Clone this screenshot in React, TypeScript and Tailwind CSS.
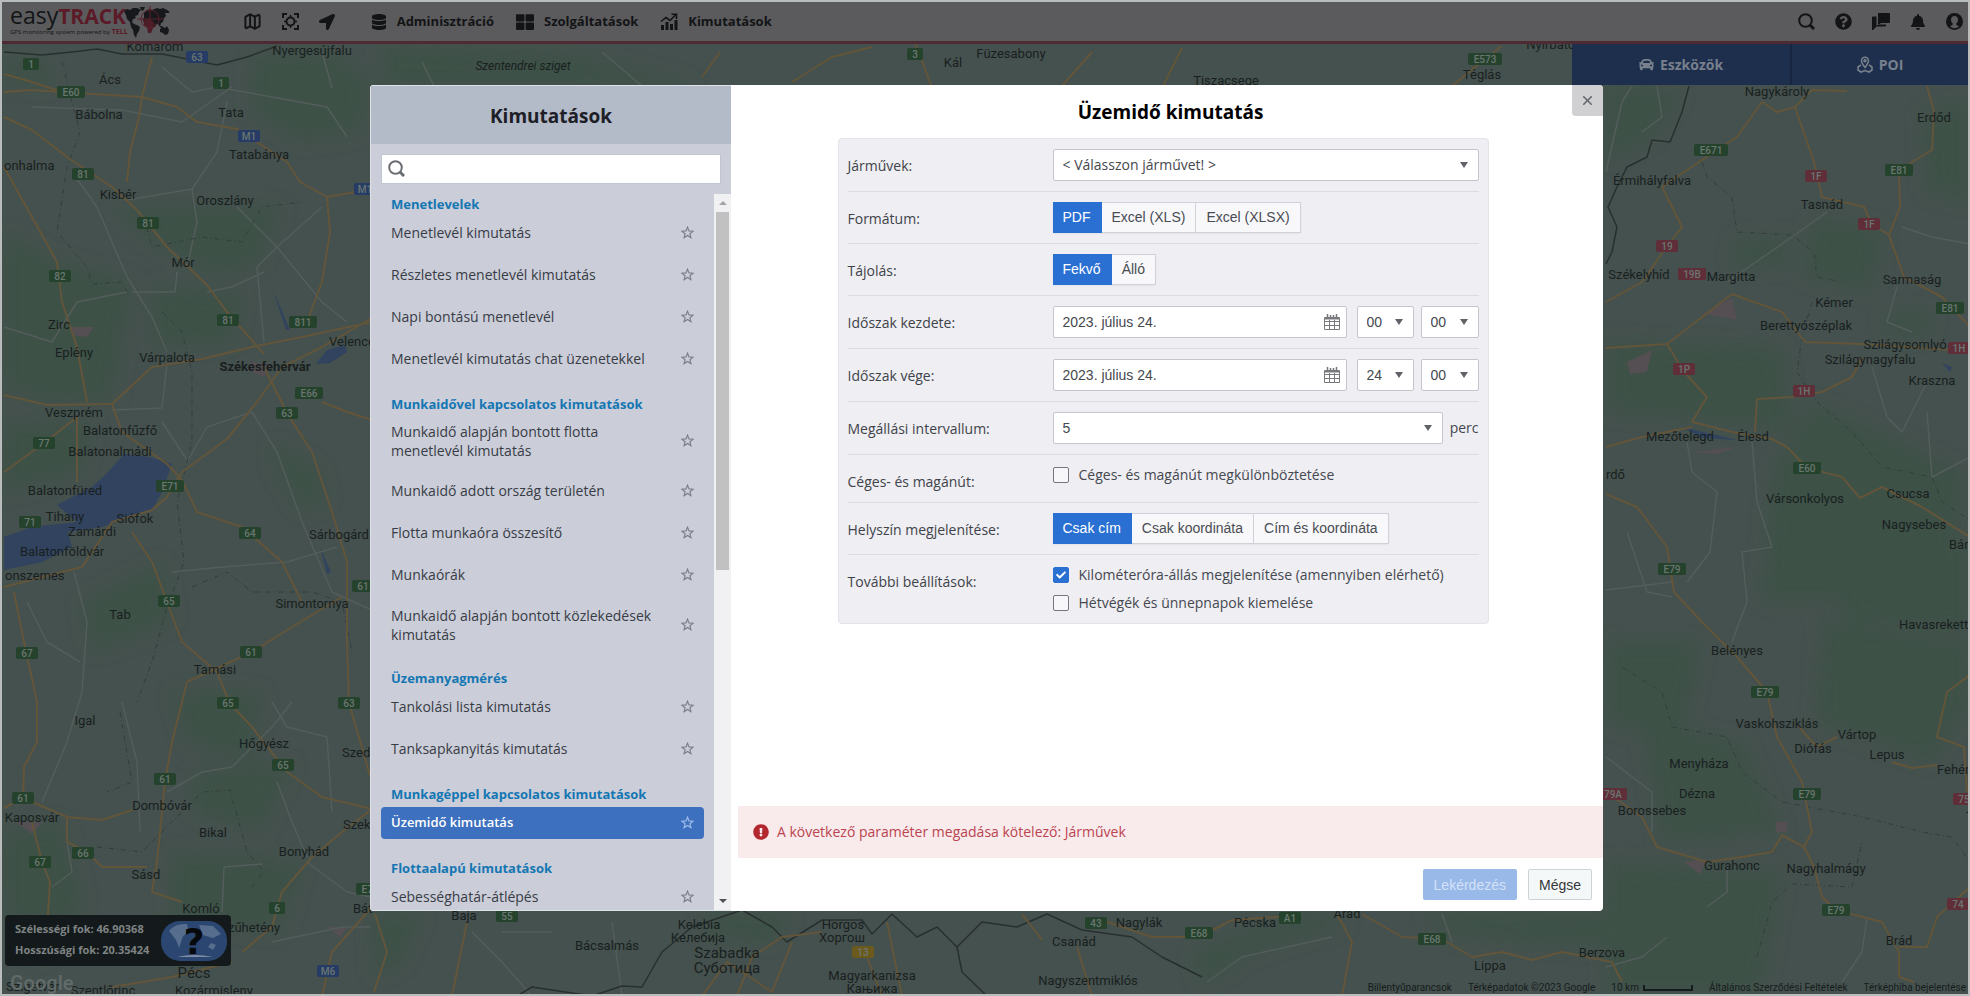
import React, { useState } from 'react';
import { Map as MapIcon, X } from 'lucide-react';
import { FaBell, FaCar, FaCheck, FaDatabase, FaExclamationCircle, FaLocationArrow, FaQuestionCircle, FaThLarge } from 'react-icons/fa';

type Point = [number, number];
type Place = [string, number, number, ('start' | 'middle')?, string?];
type Shield = [string, number, number, string];

const GREEN = '#25422d';
const BLUE = '#263c66';
const RED = '#602e39';
const YELLOW = '#6b5a1c';

const places: Place[] = [
  ['Komárom', 153, 45], ['Nyergesújfalu', 310, 49], ['Ács', 108, 78], ['Bábolna', 97, 113], ['Tata', 229, 111],
  ['Tatabánya', 257, 153], ['onhalma', 2, 164, 'start'], ['Kisbér', 116, 193], ['Oroszlány', 223, 199], ['Mór', 181, 261],
  ['Zirc', 57, 323], ['Eplény', 72, 351], ['Várpalota', 165, 356], ['Székesfehérvár', 263, 365, 'middle', 'text-[13px] font-bold'],
  ['Velence', 350, 340], ['Veszprém', 72, 411], ['Balatonfűzfő', 118, 429], ['Balatonalmádi', 108, 450],
  ['Balatonfüred', 63, 489], ['Tihany', 63, 515], ['Zamárdi', 90, 530], ['Siófok', 133, 517], ['Balatonföldvár', 60, 550],
  ['onszemes', 3, 574, 'start'], ['Sárbogárd', 337, 533], ['Simontornya', 310, 602], ['Tab', 118, 613], ['Tamási', 213, 668],
  ['Igal', 83, 719], ['Hőgyész', 262, 742], ['Szedr', 340, 751, 'start'], ['Dombóvár', 160, 804], ['Kaposvár', 30, 816],
  ['Bikal', 211, 831], ['Bonyhád', 302, 850], ['Szeks', 341, 823, 'start'], ['Sásd', 144, 873], ['Komló', 199, 907],
  ['Bát', 351, 907, 'start'], ['zűhetény', 226, 926, 'start'], ['Pécs', 192, 972, 'middle', 'text-[15px]'],
  ['Szentlőrinc', 101, 989], ['Kozármisleny', 212, 989], ['Szigetvár', 4, 985, 'start'],
  ['Szentendrei sziget', 521, 64, 'middle', 'text-xs italic'], ['Kál', 951, 61], ['Füzesabony', 1009, 52], ['Tiszacsege', 1224, 79],
  ['Téglás', 1480, 73], ['Nyírbátor', 1551, 43], ['Nagykároly', 1775, 90], ['Erdőd', 1932, 116], ['Érmihályfalva', 1650, 179],
  ['Tasnád', 1820, 203], ['Székelyhíd', 1637, 273], ['Margitta', 1729, 275], ['Sarmaság', 1910, 278], ['Kémer', 1832, 301],
  ['Berettyószéplak', 1804, 324], ['Szilágysomlyó', 1903, 343], ['Szilágynagyfalu', 1868, 358], ['Kraszna', 1930, 379],
  ['Mezőtelegd', 1678, 435], ['Élesd', 1751, 435], ['rdő', 1604, 473, 'start'], ['Vársonkolyos', 1803, 497],
  ['Csucsa', 1906, 492], ['Nagysebes', 1912, 523], ['Bán', 1947, 543, 'start'], ['Havasreketty', 1897, 623, 'start'],
  ['Belényes', 1735, 649], ['Vaskohsziklás', 1775, 722], ['Vártop', 1855, 733], ['Diófás', 1811, 747], ['Lepus', 1885, 753],
  ['Menyháza', 1697, 762], ['Fehérv', 1935, 768, 'start'], ['Dézna', 1695, 792], ['Borossebes', 1650, 809],
  ['T', 1964, 815, 'start'], ['Gurahonc', 1730, 864], ['Nagyhalmágy', 1824, 867], ['Brád', 1897, 939], ['Berzova', 1600, 951],
  ['Baja', 462, 914], ['Kelebia', 697, 923], ['Келебија', 696, 936], ['Horgos', 841, 923], ['Хоргош', 840, 936],
  ['Bácsalmás', 605, 944], ['Szabadka', 725, 952, 'middle', 'text-[15px]'],
  ['Суботица', 725, 967, 'middle', 'text-[15px]'], ['Magyarkanizsa', 870, 974], ['Кањижа', 870, 987],
  ['Nagylák', 1137, 921], ['Csanád', 1072, 940], ['Pécska', 1253, 921], ['Arad', 1345, 912], ['Nagyszentmiklós', 1086, 979],
  ['Lippa', 1488, 964],
];

const shields: Shield[] = [
  ['1', 29, 62, GREEN], ['63', 195, 55, BLUE], ['1', 219, 81, GREEN], ['E60', 69, 90, GREEN], ['M1', 247, 134, BLUE],
  ['M1', 363, 187, BLUE], ['81', 81, 172, GREEN], ['81', 146, 221, GREEN], ['82', 58, 274, GREEN], ['81', 226, 318, GREEN],
  ['811', 301, 320, GREEN], ['E66', 307, 391, GREEN], ['63', 285, 411, GREEN], ['77', 42, 441, GREEN], ['E71', 168, 484, GREEN],
  ['71', 28, 520, GREEN], ['64', 248, 531, GREEN], ['65', 167, 599, GREEN], ['61', 361, 584, GREEN], ['67', 25, 651, GREEN],
  ['61', 249, 650, GREEN], ['65', 226, 701, GREEN], ['63', 347, 701, GREEN], ['61', 163, 777, GREEN], ['65', 281, 763, GREEN],
  ['61', 21, 796, GREEN], ['66', 81, 851, GREEN], ['67', 38, 860, GREEN], ['6', 275, 906, GREEN], ['M6', 326, 969, BLUE],
  ['E73', 368, 887, GREEN], ['3', 913, 52, GREEN], ['E573', 1483, 57, GREEN], ['E671', 1709, 148, GREEN], ['1F', 1814, 174, RED],
  ['E81', 1897, 168, GREEN], ['1F', 1867, 222, RED], ['19', 1665, 244, RED], ['19B', 1690, 272, RED], ['E81', 1948, 306, GREEN],
  ['1H', 1957, 346, RED], ['1P', 1682, 367, RED], ['1H', 1802, 389, RED], ['E60', 1805, 466, GREEN], ['E79', 1670, 567, GREEN],
  ['E79', 1763, 690, GREEN], ['79A', 1611, 792, RED], ['E79', 1805, 792, GREEN], ['75', 1962, 797, RED], ['E79', 1834, 908, GREEN],
  ['74', 1956, 902, RED], ['13', 861, 950, YELLOW], ['43', 1094, 921, GREEN], ['E68', 1197, 931, GREEN], ['A1', 1288, 916, GREEN],
  ['E68', 1430, 937, GREEN], ['55', 505, 914, GREEN],
];

const roads: Point[][] = [
  [[2, 90], [28, 88], [140, 95], [175, 105], [195, 120], [235, 127], [285, 160], [298, 180], [325, 195], [370, 187]],
  [[2, 72], [30, 80], [60, 90]],
  [[150, 55], [140, 95], [137, 115], [128, 150], [125, 180]],
  [[2, 115], [30, 128], [65, 155], [110, 185], [135, 208], [165, 245], [205, 283], [225, 310], [262, 352]],
  [[2, 165], [30, 215], [55, 260], [60, 300], [75, 345], [85, 400]],
  [[2, 393], [45, 403], [110, 402], [150, 365], [200, 357], [250, 345], [300, 335], [370, 320]],
  [[370, 316], [320, 345], [280, 365], [255, 400], [225, 437], [180, 470], [165, 495], [150, 508], [110, 520], [80, 565], [60, 570], [2, 585]],
  [[325, 195], [328, 230], [320, 280], [305, 320]],
  [[2, 470], [42, 441], [75, 415], [75, 480]],
  [[110, 402], [120, 430], [165, 462], [180, 478]],
  [[180, 478], [195, 510], [240, 525], [280, 560], [300, 600]],
  [[262, 365], [285, 411], [310, 450], [330, 510], [345, 560], [345, 640], [347, 701], [370, 780]],
  [[320, 400], [345, 410], [370, 418]],
  [[340, 595], [290, 625], [250, 650], [185, 680], [170, 740], [163, 780], [155, 860], [150, 890], [180, 900]],
  [[130, 530], [150, 560], [165, 600], [180, 640], [215, 670], [228, 702], [250, 725], [285, 770], [320, 795], [370, 807]],
  [[12, 590], [22, 640], [35, 700], [35, 740], [22, 765], [21, 796], [2, 806]],
  [[21, 796], [65, 815], [100, 818], [130, 808]],
  [[65, 815], [65, 840], [85, 850], [100, 865], [145, 865]],
  [[30, 820], [40, 860], [48, 880], [45, 925]],
  [[370, 807], [340, 830], [310, 855], [280, 890], [270, 925], [240, 950]],
  [[370, 905], [330, 950], [320, 994]],
  [[110, 985], [170, 975], [230, 960]],
  [[700, 75], [718, 50]], [[790, 80], [830, 55], [870, 45]], [[913, 40], [930, 86]], [[1060, 84], [1090, 50]],
  [[1160, 86], [1180, 46]], [[1450, 84], [1483, 57], [1500, 44]],
  [[1845, 89], [1810, 88], [1793, 105], [1812, 160], [1820, 195], [1862, 205], [1870, 222], [1887, 233]],
  [[1793, 105], [1775, 110], [1760, 100], [1735, 135], [1700, 158], [1660, 185], [1680, 225], [1665, 244], [1640, 280], [1604, 300]],
  [[1925, 84], [1932, 110], [1930, 148], [1897, 168], [1898, 205], [1887, 233], [1902, 275], [1940, 295], [1968, 325]],
  [[1604, 346], [1665, 342], [1730, 292], [1780, 310], [1803, 340], [1860, 342], [1950, 348]],
  [[1665, 342], [1682, 370], [1705, 395], [1690, 420], [1730, 430], [1770, 437], [1785, 445], [1805, 466], [1840, 475], [1858, 496], [1880, 485], [1920, 505], [1968, 535]],
  [[1604, 445], [1640, 435], [1690, 425]],
  [[1753, 430], [1755, 397], [1790, 395], [1820, 390], [1850, 375], [1860, 355]],
  [[1604, 492], [1635, 505], [1665, 545], [1672, 590], [1700, 620], [1735, 655], [1765, 690], [1775, 735], [1800, 780], [1810, 830], [1802, 845], [1812, 865], [1820, 895], [1834, 908], [1880, 920], [1897, 950], [1897, 975], [1912, 980]],
  [[1797, 725], [1815, 745], [1835, 735]],
  [[1890, 760], [1910, 766], [1935, 763]],
  [[1968, 673], [1945, 690], [1935, 735], [1962, 745], [1965, 790]],
  [[1604, 790], [1640, 815], [1655, 845], [1705, 860], [1740, 855], [1770, 850], [1780, 833], [1802, 845]],
  [[1968, 885], [1935, 915], [1925, 945], [1897, 945]],
  [[373, 912], [385, 950], [372, 990]], [[465, 920], [450, 994]],
  [[735, 994], [750, 955], [780, 935], [820, 930]], [[700, 994], [725, 960], [770, 990], [790, 940]],
  [[865, 955], [880, 994]], [[885, 920], [900, 994]], [[1020, 912], [1040, 938]],
  [[1075, 945], [1090, 994]], [[1100, 918], [1150, 935], [1197, 935], [1230, 918], [1290, 914]],
  [[1335, 912], [1350, 940], [1340, 994]], [[1360, 912], [1400, 935], [1440, 937], [1470, 955], [1500, 950], [1530, 958], [1560, 950], [1610, 960], [1620, 980]],
];

const lanes: Point[][] = [
  [[30, 105], [120, 108], [180, 120], [230, 85]], [[160, 65], [190, 90], [215, 85], [325, 105], [345, 135]],
  [[70, 170], [95, 205], [125, 275], [150, 315], [165, 350]], [[125, 198], [190, 187], [195, 220], [185, 265]],
  [[190, 187], [215, 150], [225, 100]], [[235, 205], [275, 245], [255, 265], [262, 340]], [[275, 245], [320, 205]],
  [[130, 290], [173, 290], [175, 270]], [[205, 290], [230, 285], [262, 270]], [[275, 245], [320, 300], [345, 320]],
  [[2, 325], [50, 340], [75, 300], [125, 290]], [[110, 408], [160, 406], [165, 362]], [[160, 420], [185, 458]],
  [[250, 410], [275, 450], [300, 520], [330, 590], [370, 608]], [[185, 460], [205, 425], [250, 410]],
  [[170, 570], [220, 565], [285, 560], [335, 545]], [[72, 570], [85, 620], [80, 690], [65, 740], [40, 800]],
  [[25, 600], [45, 640], [78, 660]], [[120, 700], [135, 760], [138, 830]], [[165, 790], [200, 770], [230, 765], [270, 725], [290, 700]],
  [[325, 735], [285, 725], [270, 700]], [[325, 735], [330, 810]], [[275, 780], [290, 820], [305, 855]],
  [[220, 910], [222, 865], [260, 862]], [[65, 840], [70, 870], [50, 885]], [[305, 860], [345, 890], [368, 895]],
  [[270, 940], [340, 925], [368, 925]], [[320, 50], [330, 86]], [[420, 60], [440, 100]], [[600, 50], [640, 84]],
  [[1604, 170], [1620, 100], [1630, 84]], [[1655, 84], [1660, 115], [1640, 130]], [[1725, 280], [1790, 235], [1825, 210]],
  [[1900, 225], [1930, 235], [1968, 242]], [[1895, 285], [1885, 320], [1910, 330]], [[1870, 365], [1885, 415], [1900, 430], [1925, 380]],
  [[1925, 410], [1930, 475], [1968, 455]], [[1750, 440], [1755, 500], [1770, 545], [1740, 550], [1745, 600], [1730, 640]],
  [[1685, 440], [1690, 470], [1715, 490], [1708, 550], [1685, 580]], [[1604, 588], [1670, 580]],
  [[1625, 530], [1645, 590], [1670, 595]], [[1604, 755], [1650, 790], [1650, 830]], [[1725, 865], [1725, 890], [1705, 905]],
  [[1865, 915], [1860, 950], [1840, 980]], [[1604, 965], [1640, 955], [1665, 935]], [[470, 930], [500, 960], [530, 994]],
  [[500, 930], [550, 930]], [[610, 920], [620, 994]], [[1205, 980], [1240, 955], [1330, 935]], [[1440, 912], [1450, 940]],
];

const borders: Point[][] = [
  [[2, 50], [40, 53], [70, 50], [95, 47], [120, 52], [160, 52], [215, 63], [245, 55], [275, 44]],
  [[1687, 84], [1680, 110], [1668, 140], [1650, 138], [1645, 155], [1625, 165], [1615, 185], [1606, 205], [1615, 225], [1610, 250], [1604, 262]],
  [[515, 994], [530, 985], [590, 994], [620, 984], [640, 985], [660, 950], [690, 925], [740, 908], [770, 925], [785, 940], [820, 918], [860, 918], [870, 932], [890, 912], [915, 935], [935, 925], [955, 945], [980, 920], [1015, 925], [1045, 912], [1080, 928], [1130, 935], [1160, 955], [1200, 975]],
  [[955, 945], [960, 970], [985, 994]],
];

const counties: Point[][] = [
  [[60, 60], [70, 100], [78, 130], [65, 165], [55, 230], [85, 265], [90, 282], [120, 280], [125, 290]],
  [[145, 225], [150, 245], [200, 235], [240, 240], [260, 205], [300, 200]],
  [[160, 310], [180, 330], [190, 370], [190, 440], [175, 500], [182, 560], [165, 605], [150, 660], [135, 700]],
  [[190, 585], [225, 570], [250, 590], [310, 590], [340, 600], [350, 650]],
  [[118, 710], [130, 780], [105, 790]], [[95, 845], [140, 850], [160, 830], [200, 790], [228, 788], [245, 850], [262, 870], [250, 885]],
  [[1700, 160], [1705, 175], [1730, 195], [1735, 230], [1790, 233], [1812, 250], [1815, 275], [1840, 280]],
  [[1810, 300], [1800, 335], [1795, 370], [1815, 400], [1850, 430], [1880, 465], [1930, 475], [1940, 500], [1968, 518]],
  [[1620, 665], [1660, 690], [1670, 725], [1725, 735], [1740, 770], [1780, 800], [1860, 815], [1920, 830], [1950, 835], [1968, 860]],
  [[1755, 955], [1770, 900], [1790, 882], [1850, 885], [1860, 840]],
];

const toPoints = (line: Point[]) => line.map((p) => p.join(',')).join(' ');

function MapCanvas() {
  return (
    <svg className="absolute left-0 top-0 max-w-none" width="1970" height="996" aria-hidden="true">
      <defs>
        <filter id="soft"><feGaussianBlur stdDeviation="9" /></filter>
      </defs>
      <rect width="1970" height="996" fill="#45514e" />
      {/* forests and hills */}
      <g fill="#3d5147" filter="url(#soft)">
        <path d="M250 55L330 50L370 80L360 130L300 140L250 110Z" />
        <path d="M2 60L45 60L50 85L2 80Z M2 230L60 260L130 280L110 400L60 400L2 390Z" />
        <path d="M110 205L180 205L280 205L255 265L205 270L150 240Z" />
        <path d="M150 285L240 290L230 340L150 345Z M2 420L90 420L80 470L2 490Z" />
        <path d="M270 440L315 465L325 500L300 510L275 470Z M80 600L160 560L170 620L90 650Z" />
        <path d="M170 690L260 690L250 760L185 740Z M190 770L290 760L260 830L190 810Z" />
        <path d="M2 830L60 820L80 900L40 960L2 900Z M170 850L300 860L280 930L170 920Z" />
        <path d="M380 44L560 50L700 84L380 84Z M1604 84L1680 90L1650 135L1604 160Z" />
        <path d="M1920 110L1968 100L1968 200L1925 190Z M1735 235L1790 235L1780 265L1730 265Z" />
        <path d="M1810 215L1880 225L1870 290L1800 275Z M1605 340L1780 345L1790 430L1700 420L1605 410Z" />
        <path d="M1810 400L1900 440L1960 470L1950 600L1760 600L1770 470Z" />
        <path d="M1604 640L1700 640L1680 740L1604 720Z M1820 620L1968 640L1968 700L1930 760L1815 720Z" />
        <path d="M1604 860L1780 870L1760 990L1604 990Z M1640 720L1740 740L1780 830L1660 840Z" />
        <path d="M370 912L420 912L400 960L372 975Z M700 912L790 912L770 940L710 935Z" />
        <path d="M1190 950L1300 912L1350 920L1250 950L1200 985Z M1420 912L1604 912L1604 945L1450 935Z" />
        <path d="M1840 540L1968 540L1968 630L1840 620Z M1880 310L1930 310L1925 335L1885 330Z" />
      </g>
      {/* towns */}
      <g fill="#554f53">
        <path d="M68 325L92 325L85 335L70 333Z M248 360L270 362L262 375L250 370Z" />
        <path d="M1700 312L1730 296L1735 318Z M1625 360L1650 348L1645 370L1628 372Z M1690 450L1735 445L1715 452Z" />
        <path d="M1682 860L1705 857L1698 872Z M1774 820L1785 820L1785 830L1774 830Z M14 820L40 820L30 832Z M325 925L345 925L338 935Z" />
      </g>
      <g fill="#31435f">
        <path d="M170 462L148 455L122 452L104 472L90 485L55 503L75 520L30 525L2 535L2 568L40 560L70 545L66 530L100 525L150 508L160 490Z" />
        <path d="M314 362L325 348L343 343L345 350L328 361Z M271 288L288 328L284 328Z M318 545L329 570L325 572Z" />
        <path d="M1680 425L1735 438L1700 436Z M1940 361L1950 365L1948 370Z" />
      </g>
      <g fill="none" strokeLinejoin="round">
        {lanes.map((line, i) => <polyline key={i} points={toPoints(line)} stroke="#535d5b" strokeWidth="1.5" />)}
        {counties.map((line, i) => <polyline key={i} points={toPoints(line)} stroke="#333e3c" strokeWidth="1" strokeDasharray="5 3 1 3" />)}
        {borders.map((line, i) => <polyline key={i} points={toPoints(line)} stroke="#28302f" strokeWidth="1.5" />)}
        {roads.map((line, i) => <polyline key={i} points={toPoints(line)} stroke="#62553a" strokeWidth="2" />)}
      </g>
      {shields.map(([name, x, y, color], i) => (
        <g key={i}>
          <rect x={x - name.length * 3 - 5} y={y - 6} width={name.length * 6 + 10} height="12" rx="2" fill={color} />
          <text x={x} y={y + 4} textAnchor="middle" fill="#6a7670" className="font-['Roboto',sans-serif] text-[10px] font-medium">{name}</text>
        </g>
      ))}
      {places.map(([name, x, y, anchor = 'middle', extra = 'text-[13px]']) => (
        <text key={name} x={x} y={y + 4} textAnchor={anchor} fill="#191f20" className={`font-['Roboto',sans-serif] ${extra}`}>
          {name}
        </text>
      ))}
    </svg>
  );
}

function WorldLogo() {
  return (
    <svg width="46" height="32" viewBox="0 0 46 32" className="-ml-1" aria-hidden="true">
      <path d="M0 5l3-2 3 1 3-2 4 0 4 2-2 2-1 3-3 1 1 2-3 1-1 3 2 2 3 1 3 2-1 4-2 3-1 4-2-3-1-5-2-3-1-5-3-3-1-4zM16 1l5 0-2 4-2-1zM20 11l0-4 3-3 3-1 2 1 5-2 3 1 3-1 4 2 3 2-2 1-3 0 1 3-2 2-1 4-2 1-1 4-2-3-2 0-2 4-3-4-2-1-2 1-3-1-1-3zM36 23l3-2 2 1 2-2 2 4-1 4-3 1-2-2-3-1zM35 18l2 2 3 1-3 1z" fill="#17181b" />
      <path d="M20 14l3-1 3 1 3 1 2 3-2 4-2 5-3 0-1-6-3-2z" fill="#4a1c26" />
      <g fill="none" stroke="#5c1f2b">
        <circle cx="26" cy="13" r="9" />
        <path d="M26 0v26M13 13h26" />
      </g>
    </svg>
  );
}

function TargetIcon() {
  return (
    <svg width="17" height="17" viewBox="0 0 17 17" fill="none" stroke="currentColor" strokeWidth="2" aria-hidden="true">
      <path d="M1 5V1h4M12 1h4v4M16 12v4h-4M5 16H1v-4" />
      <circle cx="8.500" cy="8.500" r="4" />
      <path d="M8.500 2v3M8.500 12v3M2 8.500h3M12 8.500h3" strokeWidth="1.500" />
    </svg>
  );
}

function GrowthIcon() {
  return (
    <svg width="18" height="17" viewBox="0 0 18 17" aria-hidden="true">
      <path d="M1 12h3v5H1zM5.500 9h3v8h-3zM10 11h3v6h-3zM14.500 7h3v10h-3z" fill="currentColor" />
      <path d="M1 8.500L6 4.500l4 3L15.500 2M11.500 1.200H16.500V6" fill="none" stroke="currentColor" strokeWidth="1.600" />
    </svg>
  );
}

function SearchIcon() {
  return (
    <svg width="17" height="17" viewBox="0 0 17 17" fill="none" stroke="currentColor" aria-hidden="true">
      <circle cx="7.500" cy="7.500" r="6.300" strokeWidth="2" />
      <path d="M12 12l4 4" strokeWidth="3" />
    </svg>
  );
}

function ChatIcon() {
  return (
    <svg width="18" height="17" viewBox="0 0 18 17" fill="currentColor" aria-hidden="true">
      <path d="M6 0h11q1 0 1 1v8q0 1-1 1H9l-3 2z" />
      <path d="M0 4.500q0-1 1-1h3.500V12.500L8 11.500h6v1q0 1-1 1H4.500L1 17H0z" />
    </svg>
  );
}

function UserIcon() {
  return (
    <svg width="17" height="17" viewBox="0 0 17 17" aria-hidden="true">
      <circle cx="8.500" cy="8.500" r="8.500" fill="currentColor" />
      <path d="M8.500 3C6.300 3 5 4.600 5 6.800 5 8.500 5.800 9.700 6.800 10.500L6.500 12 3.800 13.300Q8.500 17 13.200 13.300L10.500 12 10.200 10.500C11.200 9.700 12 8.500 12 6.800 12 4.600 10.700 3 8.500 3Z" fill="#5b5b5d" />
    </svg>
  );
}

function PoiIcon() {
  return (
    <svg width="16" height="17" viewBox="0 0 16 17" fill="none" stroke="currentColor" strokeWidth="1.600" aria-hidden="true">
      <path d="M8 11.500C6 9 4.500 7 4.500 4.800a3.500 3.500 0 0 1 7 0C11.500 7 10 9 8 11.500z" />
      <circle cx="8" cy="4.800" r="1" />
      <path d="M4 9L1 11v3l3 2 4-1.500 4 1.500 3-2v-3l-3-2" />
    </svg>
  );
}

function StarIcon() {
  return (
    <svg width="13" height="13" viewBox="0 0 13 13" fill="none" stroke="currentColor" strokeWidth="1.200" aria-hidden="true">
      <path d="M6.500 1.200L8 4.900l4 .3-3.100 2.500 1 3.900-3.400-2.100-3.400 2.100 1-3.900L1 5.200l4-.3z" />
    </svg>
  );
}

function CalendarIcon() {
  return (
    <svg width="16" height="16" viewBox="0 0 16 16" fill="none" stroke="#77797c" aria-hidden="true">
      <path d="M.5 3.500h15v12H.5zM.5 7.500h15M.5 11.500h15M5.500 6v9M10.500 6v9" />
      <path d="M1 4.500h14" strokeWidth="2" />
      <path d="M3.500 0v4M6.500 1v3M9.500 1v3M12.500 0v4" strokeWidth="1.500" />
    </svg>
  );
}

const nav = [
  { label: 'Adminisztráció', icon: <FaDatabase size={16} /> },
  { label: 'Szolgáltatások', icon: <FaThLarge size={18} /> },
  { label: 'Kimutatások', icon: <GrowthIcon /> },
];

const TopBar = () => (
  <header className="relative flex h-[42px] items-center border-b-3 border-[#4e2a33] bg-[#5b5b5d] text-[#131416]">
    <a href="#" className="ml-2 flex items-center" aria-label="easyTRACK">
      <span className="flex flex-col">
        <span className="flex items-baseline leading-4">
          <span className="text-[23px]">easy</span>
          <span className="text-[21px] font-bold text-[#5a1a28]">TRACK</span>
        </span>
        <span className="mt-1 flex items-center gap-[2px] text-[6px] leading-2">
          GPS monitoring system powered by <b className="text-[7px] text-[#5a1a28]">TELL</b>
        </span>
      </span>
      <WorldLogo />
    </a>
    <div className="ml-[73px] flex items-center gap-5">
      <button aria-label="Térkép"><MapIcon size={19} strokeWidth={2.5} /></button>
      <button aria-label="Nézet"><TargetIcon /></button>
      <button aria-label="Pozíció"><FaLocationArrow size={16} /></button>
    </div>
    <nav className="ml-9 flex items-center gap-[22px] text-[13px] font-bold">
      {nav.map((item) => (
        <a key={item.label} href="#" className="flex items-center gap-[10px]">
          {item.icon}
          {item.label}
        </a>
      ))}
    </nav>
    <div className="ml-auto mr-[5px] flex items-center gap-5">
      <button aria-label="Keresés"><SearchIcon /></button>
      <button aria-label="Súgó"><FaQuestionCircle size={17} /></button>
      <button aria-label="Üzenetek"><ChatIcon /></button>
      <button aria-label="Értesítések"><FaBell size={16} /></button>
      <button aria-label="Profil"><UserIcon /></button>
    </div>
  </header>
);

const groups = [
  { title: 'Menetlevelek', items: ['Menetlevél kimutatás', 'Részletes menetlevél kimutatás', 'Napi bontású menetlevél', 'Menetlevél kimutatás chat üzenetekkel'] },
  {
    title: 'Munkaidővel kapcsolatos kimutatások',
    items: ['Munkaidő alapján bontott flotta menetlevél kimutatás', 'Munkaidő adott ország területén', 'Flotta munkaóra összesítő', 'Munkaórák', 'Munkaidő alapján bontott közlekedések kimutatás'],
  },
  { title: 'Üzemanyagmérés', items: ['Tankolási lista kimutatás', 'Tanksapkanyitás kimutatás'] },
  { title: 'Munkagéppel kapcsolatos kimutatások', items: ['Üzemidő kimutatás'] },
  { title: 'Flottaalapú kimutatások', items: ['Sebességhatár-átlépés'] },
];

function Sidebar() {
  const [active, setActive] = useState('Üzemidő kimutatás');
  return (
    <aside className="flex w-[361px] shrink-0 flex-col border border-r-0 border-[#dfe2e8] bg-[#cbced9]">
      <h2 className="flex h-[58px] items-center justify-center bg-[#b3bac8] pt-1 text-[19px] font-bold text-[#1c2026]">Kimutatások</h2>
      <div className="m-[10px] flex h-[30px] items-center gap-2 border border-[#c0c6d0] bg-white pl-[6px] text-[#6a6d71]">
        <SearchIcon />
        <input type="search" aria-label="Keresés a kimutatások között" className="min-w-0 flex-1 bg-transparent text-sm outline-none" />
      </div>
      <div className="flex min-h-0 flex-1">
        <div className="flex-1 overflow-hidden px-[10px]">
          {groups.map((group) => (
            <section key={group.title} className="mb-[19px]">
              <h3 className="mb-[3px] pl-[10px] text-[13px] font-bold leading-5 text-[#1476b2]">{group.title}</h3>
              <ul className="flex flex-col gap-[10px]">
                {group.items.map((item) => (
                  <li key={item}>
                    <button
                      onClick={() => setActive(item)}
                      className={`flex min-h-8 w-full items-center justify-between rounded px-[10px] py-[5px] text-left leading-[19px] ${
                        item === active ? 'bg-[#3d70be] text-[13px] font-semibold text-white' : 'text-sm text-[#383c45]'
                      }`}
                    >
                      <span className="max-w-[270px]">{item}</span>
                      <span className={item === active ? 'text-[#9dbaea]' : 'text-[#7c818d]'}><StarIcon /></span>
                    </button>
                  </li>
                ))}
              </ul>
            </section>
          ))}
        </div>
        <div className="flex w-[17px] flex-col items-center bg-[#f1f1f4]">
          <span className="flex h-[18px] items-center text-[#a3a3a3]">
            <svg width="8" height="4" viewBox="0 0 8 4" fill="currentColor"><path d="M4 0l4 4H0z" /></svg>
          </span>
          <span className="h-1/2 w-[13px] bg-[#c1c1c1]" />
          <span className="mt-auto flex h-[18px] items-center text-[#505050]">
            <svg width="8" height="4" viewBox="0 0 8 4" fill="currentColor"><path d="M4 4L0 0h8z" /></svg>
          </span>
        </div>
      </div>
    </aside>
  );
}

type RowProps = { label: string; htmlFor?: string; last?: boolean; children: React.ReactNode };

const Row = ({ label, htmlFor, last, children }: RowProps) => (
  <div className={`flex items-start border-[#d9dce3] ${last ? '' : 'border-b'}`}>
    <label htmlFor={htmlFor} className="w-[205px] shrink-0 pb-[10px] pt-[17px] text-sm leading-5 text-[#3f4349]">{label}</label>
    <div className="flex flex-1 items-center py-[10px]">{children}</div>
  </div>
);

const boxStyle = 'h-8 w-full rounded-xs border border-[#c3c7cd] bg-white pl-[9px] text-[#45484d]';

type SelectProps = { id?: string; label: string; options: string[]; className: string; font: string };

const Select = ({ id, label, options, className, font }: SelectProps) => (
  <div className={`relative ${className}`}>
    <select id={id} aria-label={label} className={`appearance-none ${boxStyle} ${font}`}>
      {options.map((o) => <option key={o}>{o}</option>)}
    </select>
    <svg width="8" height="6" viewBox="0 0 8 6" fill="#5f6368" className="pointer-events-none absolute right-[11px] top-[13px]" aria-hidden="true">
      <path d="M0 0h8L4 6z" />
    </svg>
  </div>
);

const arial = "font-['Liberation_Sans',Arial,sans-serif] text-sm";

function Segmented({ options, initial }: { options: string[]; initial: string }) {
  const [value, setValue] = useState(initial);
  return (
    <div className={`flex rounded-xs shadow-xs ${arial}`}>
      {options.map((o) => (
        <button
          key={o}
          type="button"
          aria-pressed={o === value}
          onClick={() => setValue(o)}
          className={`h-[31px] border border-l-0 px-[10px] ${o === value ? 'border-[#2a70d2] bg-[#2a70d2] text-white' : 'border-[#cfd2d8] bg-[#f8f8fb] text-[#494c52]'}`}
        >
          {o}
        </button>
      ))}
    </div>
  );
}

function Check({ label, initial = false }: { label: string; initial?: boolean }) {
  const [checked, setChecked] = useState(initial);
  return (
    <label className="flex items-center gap-[10px] text-sm leading-5 text-[#45484f]">
      <span className="relative flex h-4 w-4">
        <input
          type="checkbox"
          checked={checked}
          onChange={() => setChecked(!checked)}
          className="h-4 w-4 appearance-none rounded-xs border border-[#74777d] bg-[#f7f7fa] checked:border-[#2a70d2] checked:bg-[#2a70d2]"
        />
        {checked && <FaCheck size={10} className="pointer-events-none absolute left-[3px] top-[3px] text-white" />}
      </span>
      {label}
    </label>
  );
}

function DateRow({ id, label, hour }: { id: string; label: string; hour: string }) {
  return (
    <Row label={label} htmlFor={id}>
      <div className="relative mr-[10px] flex-1">
        <input id={id} type="text" defaultValue="2023. július 24." className={`${boxStyle} ${arial}`} />
        <button type="button" aria-label="Naptár" className="absolute right-[7px] top-2"><CalendarIcon /></button>
      </div>
      <Select label={`${label} óra`} options={[hour]} className="mr-[7px] w-[57px]" font={arial} />
      <Select label={`${label} perc`} options={['00']} className="w-[58px]" font={arial} />
    </Row>
  );
}

const ReportForm = () => (
  <form className="mx-auto w-[651px] max-w-full rounded border border-[#e1e3e8] bg-[#eeeef3] px-[9px]">
    <Row label="Járművek:" htmlFor="vehicles">
      <Select id="vehicles" label="Járművek" options={['< Válasszon járművet! >']} className="flex-1" font="text-sm" />
    </Row>
    <Row label="Formátum:"><Segmented options={['PDF', 'Excel (XLS)', 'Excel (XLSX)']} initial="PDF" /></Row>
    <Row label="Tájolás:"><Segmented options={['Fekvő', 'Álló']} initial="Fekvő" /></Row>
    <DateRow id="from" label="Időszak kezdete:" hour="00" />
    <DateRow id="to" label="Időszak vége:" hour="24" />
    <Row label="Megállási intervallum:" htmlFor="interval">
      <Select id="interval" label="Megállási intervallum" options={['5']} className="mr-[7px] flex-1" font={arial} />
      <span className="text-sm text-[#45484f]">perc</span>
    </Row>
    <Row label="Céges- és magánút:">
      <Check label="Céges- és magánút megkülönböztetése" />
    </Row>
    <Row label="Helyszín megjelenítése:">
      <Segmented options={['Csak cím', 'Csak koordináta', 'Cím és koordináta']} initial="Csak cím" />
    </Row>
    <Row label="További beállítások:" last>
      <div className="flex flex-col gap-2">
        <Check label="Kilométeróra-állás megjelenítése (amennyiben elérhető)" initial />
        <Check label="Hétvégék és ünnepnapok kiemelése" />
      </div>
    </Row>
  </form>
);

const ReportDialog = () => (
  <div role="dialog" aria-modal="true" aria-label="Kimutatások" className="relative flex h-[83vh] w-[calc(100%-730px)] overflow-hidden rounded bg-white">
    <Sidebar />
    <div className="flex min-w-0 flex-1 flex-col pl-[7px]">
      <h1 className="mb-3 mt-[13px] text-center text-[19px] font-bold leading-7 text-black">Üzemidő kimutatás</h1>
      <div className="min-h-0 flex-1 overflow-hidden pr-[15px]">
        <ReportForm />
      </div>
      <div role="alert" className="flex h-[52px] shrink-0 items-center gap-2 bg-[#f9ebec] pl-[15px] text-sm text-[#bb4450]">
        <FaExclamationCircle size={16} className="text-[#b3272f]" />
        A következő paraméter megadása kötelező: Járművek
      </div>
      <div className={`flex justify-end gap-[11px] py-[11px] pr-[11px] ${arial}`}>
        <button disabled className="h-[31px] rounded-xs bg-[#99b9e9] px-[11px] text-[#d3e2f8]">Lekérdezés</button>
        <button className="h-[31px] rounded-xs border border-[#cfd3d6] bg-[#f5f8f8] px-[10px] text-[#33363a]">Mégse</button>
      </div>
    </div>
    <button aria-label="Bezárás" className="absolute right-0 top-0 flex h-[31px] w-[31px] items-center justify-center rounded-bl bg-[#d0d0d3] text-[#64676c]">
      <X size={15} strokeWidth={2.5} />
    </button>
  </div>
);

const Coordinates = () => (
  <div className="absolute bottom-7 left-[3px] flex h-[51px] w-[226px] items-center justify-between rounded bg-[#141a1b] pl-[10px] pr-1 text-[11px] font-bold leading-[21px] text-[#7f8384]">
    <p className="pb-1">Szélességi fok: 46.90368<br />Hosszúsági fok: 20.35424</p>
    <svg width="66" height="40" viewBox="0 0 66 40" aria-hidden="true">
      <rect width="66" height="40" rx="19" fill="#2b4670" />
      <path d="M8 10Q14 2 26 3l2 8-6 4-4 12-3-8zM38 4l14 1 8 8-8 4-10-3zM50 22l5 2-3 5-5-3z" fill="#566d8e" />
      <path d="M16 36q17-4 36 0z" fill="#7f8ea4" />
      <text x="33" y="33" textAnchor="middle" fill="#07090c" className="font-['DejaVu_Sans',sans-serif] text-[36px] font-bold">?</text>
    </svg>
  </div>
);

export default function App() {
  return (
    <div className="relative flex min-h-screen flex-col overflow-hidden border-2 border-[#b9bdbb] bg-[#46524f] font-['Open_Sans','Noto_Sans',sans-serif]">
      <MapCanvas />
      <TopBar />
      <div className="relative flex h-[41px] w-[396px] self-end bg-[#1e2f4e] text-sm font-bold text-[#77808c]">
        <button className="flex w-[220px] items-center justify-center gap-[6px] border-r-2 border-[#172540]"><FaCar size={15} />Eszközök</button>
        <button className="flex flex-1 items-center justify-center gap-[6px]"><PoiIcon />POI</button>
      </div>
      <Coordinates />
      <footer className="absolute inset-x-0 bottom-0 flex h-[22px] items-end font-['Roboto',sans-serif] text-[10px] leading-3 text-[#161c1d]">
        <span className="ml-2 text-xl font-medium leading-[22px] text-[#616b69]">Google</span>
        <span className="ml-auto flex items-center gap-4 whitespace-nowrap pr-[2px]">
          <a href="#">Billentyűparancsok</a>
          <span>Térképadatok ©2023 Google</span>
          <span className="flex items-center gap-1">10 km <i className="h-[6px] w-[50px] border-2 border-t-0 border-[#161c1d]" /></span>
          <a href="#">Általános Szerződési Feltételek</a>
          <a href="#">Térképhiba bejelentése</a>
        </span>
      </footer>
      <div className="absolute inset-0 flex items-center justify-center pl-[3px]">
        <ReportDialog />
      </div>
    </div>
  );
}
